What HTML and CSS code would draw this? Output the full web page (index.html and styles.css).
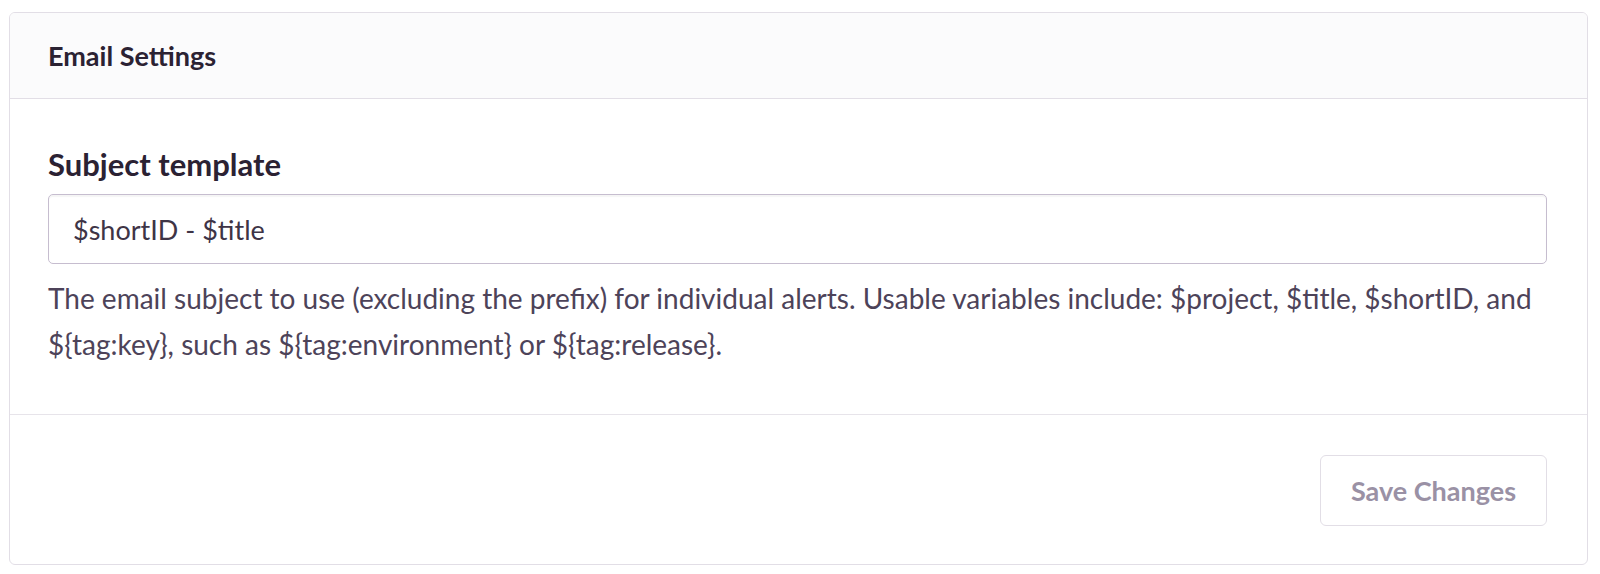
FILE: index.html
```html
<!DOCTYPE html>
<html>
<head>
<meta charset="utf-8">
<link rel="stylesheet" href="styles.css">
</head>
<body>
<div class="panel">
  <div class="panel-header">Email Settings</div>
  <div class="panel-body">
    <label class="field-label">Subject template</label>
    <div class="input">$shortID - $title</div>
    <p class="help">The email subject to use (excluding the prefix) for individual alerts. Usable variables include: $project, $title, $shortID, and ${tag:key}, such as ${tag:environment} or ${tag:release}.</p>
  </div>
  <div class="panel-footer">
    <button class="btn">Save Changes</button>
  </div>
</div>
</body>
</html>
```
FILE: styles.css
```css
html, body {
  margin: 0;
  background: #ffffff;
}
body {
  padding: 12px 12px 0 9px;
  font-family: Lato, "Open Sans", sans-serif;
  color: #2b2233;
}
.panel {
  border: 1px solid #e2dee6;
  border-radius: 6px;
  background: #ffffff;
  overflow: hidden;
}
.panel-header {
  height: 85px;
  display: flex;
  align-items: center;
  padding-left: 38px;
  background: #fbfbfc;
  border-bottom: 1px solid #e2dee6;
  font-size: 27px;
  font-weight: 700;
  color: #2b2233;
}
.panel-body {
  padding: 46px 40px 47px 38px;
  border-bottom: 1px solid #e7e4ea;
}
.field-label {
  display: block;
  font-size: 31px;
  line-height: 38px;
  font-weight: 700;
  color: #2b2233;
  margin-bottom: 11px;
}
.input {
  height: 68px;
  display: flex;
  align-items: center;
  padding: 0 24px;
  border: 1px solid #c6bdcf;
  border-radius: 5px;
  box-shadow: inset 0 2px 1px rgba(0,0,0,0.04);
  font-size: 27px;
  color: #3e3446;
}
.help {
  margin: 11px 0 0;
  font-size: 28px;
  line-height: 46px;
  color: #4d4359;
}
.panel-footer {
  display: flex;
  justify-content: flex-end;
  padding: 40px 40px 38px 38px;
}
.btn {
  width: 227px;
  height: 71px;
  border: 1px solid #e2dee6;
  border-radius: 6px;
  background: #ffffff;
  font-family: Lato, "Open Sans", sans-serif;
  font-size: 27px;
  font-weight: 700;
  color: #9a91a5;
}
```
